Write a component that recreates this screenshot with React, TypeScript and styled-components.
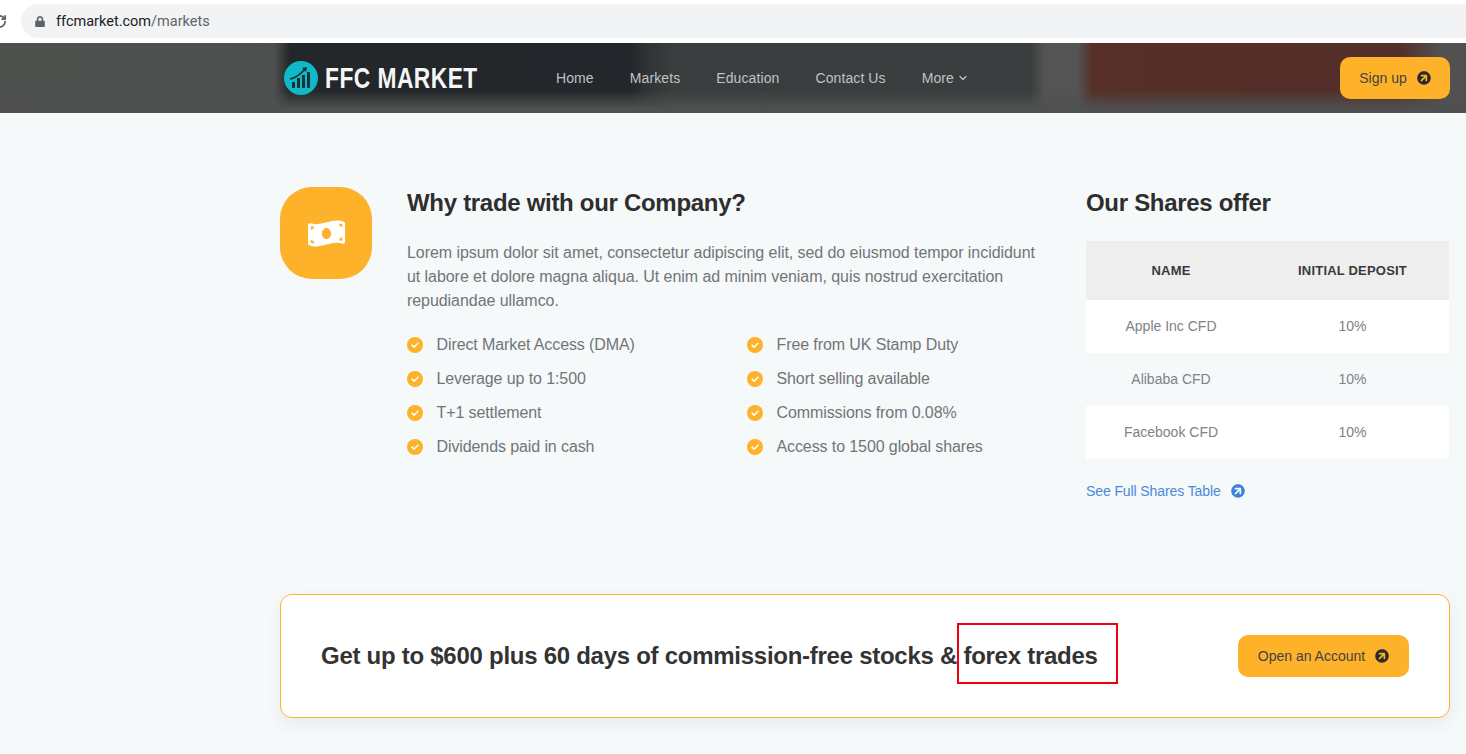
import * as React from "react";
import styled, { createGlobalStyle } from "styled-components";
import { FaArrowCircleRight, FaLock, FaMoneyBillWave } from "react-icons/fa";
import { RotateCw, ChevronDown } from "lucide-react";

const GlobalStyle = createGlobalStyle`
  html, body {
    margin: 0;
    padding: 0;
    height: 100%;
    overflow: hidden;
    background: #f5f9fa;
  }
`;

const Page = styled.div`
  font-family: "Liberation Sans", Arial, sans-serif;
  width: 1466px;
  height: 754px;
  color: #2e2e2e;
`;

const BrowserBar = styled.div`
  height: 43px;
  background: #fff;
  display: flex;
  align-items: flex-start;
  box-sizing: border-box;
  padding-top: 4px;
`;

const ReloadIcon = styled(RotateCw)`
  width: 15px;
  height: 15px;
  margin: 10px 14px 0 -8px;
  color: #5f6368;
  flex: none;
`;

const UrlPill = styled.div`
  flex: 1;
  height: 34px;
  background: #f1f3f4;
  border-radius: 17px 0 0 17px;
  display: flex;
  align-items: center;
  padding-left: 14px;
  gap: 11px;
  font-family: Roboto, sans-serif;
  font-size: 14.5px;
  color: #202124;
  svg {
    color: #5f6368;
    width: 10px;
    height: 11px;
  }
  span {
    color: #5f6368;
  }
`;

const Header = styled.header`
  height: 70px;
  box-sizing: border-box;
  padding: 0 16px 0 284px;
  display: flex;
  align-items: center;
  background:
    linear-gradient(180deg, rgba(79, 80, 80, 0) 0, rgba(79, 80, 80, 0) 68%, #4f5050 94%),
    linear-gradient(
      90deg,
      #4f514f 0,
      #4e504f 274px,
      #24272a 290px,
      #23262a 630px,
      #2f3233 645px,
      #3a3d3e 670px,
      #3a3d3e 1030px,
      #535453 1045px,
      #535453 1078px,
      #552f28 1092px,
      #532f29 1400px,
      #525150 1440px
    );
`;

const Brand = styled.div`
  display: flex;
  align-items: center;
  gap: 7px;
  width: 272px;
  flex: none;
  color: #f6f6f6;
`;

// the wordmark is a condensed face that isn't installed, so squeeze the bold one
const BrandName = styled.span`
  font-weight: 700;
  font-size: 30px;
  letter-spacing: 0.6px;
  white-space: nowrap;
  transform: scaleX(0.76);
  transform-origin: left center;
`;

const Nav = styled.nav`
  display: flex;
  align-items: center;
  gap: 36px;
  flex: 1;
`;

const NavLink = styled.a`
  font-size: 14px;
  letter-spacing: 0.1px;
  color: #bfc2c6;
  display: flex;
  align-items: center;
  gap: 3px;
`;

const PrimaryButton = styled.a<{ $w: number }>`
  width: ${(p) => p.$w}px;
  height: 42px;
  background: #fdb22a;
  border-radius: 10px;
  display: flex;
  align-items: center;
  justify-content: center;
  gap: 10px;
  font-size: 14px;
  color: #444;
  flex: none;
`;

const ArrowIcon = styled(FaArrowCircleRight)<{ $color?: string }>`
  width: 14px;
  height: 14px;
  transform: rotate(-45deg);
  color: ${(p) => p.$color || "#2b2b2b"};
  flex: none;
`;

const Main = styled.main`
  padding: 74px 16px 0 280px;
`;

const Features = styled.section`
  display: grid;
  grid-template-columns: 92px 644px 363px;
  column-gap: 35px;
  justify-content: start;
`;

const IconTile = styled.div`
  width: 92px;
  height: 92px;
  border-radius: 32px;
  background: #fdb22a;
  display: flex;
  align-items: center;
  justify-content: center;
  color: #fff;
  svg {
    width: 37px;
    height: 37px;
  }
`;

const Heading = styled.h2`
  margin: 0;
  font-size: 24px;
  line-height: 32px;
  font-weight: 700;
  letter-spacing: -0.3px;
  color: #2e2e2e;
`;

const Lead = styled.p`
  margin: 22px 0 0;
  font-size: 16px;
  line-height: 24px;
  letter-spacing: -0.06px;
  color: #737478;
`;

const CheckList = styled.ul`
  list-style: none;
  margin: 15px 0 0 -0.5px;
  padding: 0;
  display: grid;
  grid-template-columns: 340px 1fr;
  grid-auto-rows: 34px;
`;

const CheckItem = styled.li`
  display: flex;
  align-items: center;
  gap: 14px;
  font-size: 16px;
  letter-spacing: -0.1px;
  color: #737478;
`;

const Check = () => (
  <svg width="16" height="16" viewBox="0 0 16 16" style={{ flex: "none" }}>
    <circle cx="8" cy="8" r="8" fill="#fdb22a" />
    <path d="M5 8.2l2.1 2L11 6.2" fill="none" stroke="#fff" strokeWidth="1.6" strokeLinecap="round" strokeLinejoin="round" />
  </svg>
);

const SharesTable = styled.div`
  margin-top: 22px;
  display: grid;
  grid-template-columns: 170px 193px;
`;

const HeadCell = styled.div`
  height: 59px;
  background: #eeeeee;
  display: flex;
  align-items: center;
  justify-content: center;
  font-size: 13px;
  letter-spacing: 0.2px;
  font-weight: 700;
  color: #3a3a3a;
`;

const BodyCell = styled.div<{ $stripe: boolean }>`
  height: 53px;
  box-sizing: border-box;
  padding-bottom: 1px;
  background: ${(p) => (p.$stripe ? "#fff" : "transparent")};
  display: flex;
  align-items: center;
  justify-content: center;
  font-size: 14px;
  color: #808285;
`;

const SeeAll = styled.a`
  margin-top: 24px;
  display: flex;
  align-items: center;
  gap: 10px;
  font-size: 14px;
  letter-spacing: -0.1px;
  color: #4a88da;
`;

const Cta = styled.section`
  margin-top: 95px;
  box-sizing: border-box;
  height: 124px;
  width: 1170px;
  background: #fff;
  border: 1px solid #fdb22a;
  border-radius: 12px;
  box-shadow: 0 6px 16px rgba(40, 60, 80, 0.07);
  display: flex;
  align-items: center;
  justify-content: space-between;
  padding: 0 40px;
`;

const CtaText = styled.h3`
  margin: 0;
  font-size: 24px;
  font-weight: 700;
  letter-spacing: -0.27px;
  color: #333;
`;

// red annotation box that was drawn over the screenshot
const Highlight = styled.span`
  position: relative;
  &::after {
    content: "";
    position: absolute;
    left: -6px;
    top: -19px;
    width: 161px;
    height: 61px;
    box-sizing: border-box;
    border: 2px solid #f0000f;
  }
`;

const shares = ["Apple Inc CFD", "Alibaba CFD", "Facebook CFD"];
const left = ["Direct Market Access (DMA)", "Leverage up to 1:500", "T+1 settlement", "Dividends paid in cash"];
const right = ["Free from UK Stamp Duty", "Short selling available", "Commissions from 0.08%", "Access to 1500 global shares"];

export default function App() {
  return (
    <Page>
      <GlobalStyle />
      <BrowserBar>
        <ReloadIcon strokeWidth={2.8} />
        <UrlPill>
          <FaLock />
          <div>
            ffcmarket.com<span>/markets</span>
          </div>
        </UrlPill>
      </BrowserBar>
      <Header>
        <Brand>
          <svg width="34" height="34" viewBox="0 0 34 34" style={{ flex: "none" }}>
            <circle cx="17" cy="17" r="17" fill="#0fb9c8" />
            <path d="M8 27v-6h3v6zM13 27v-10h3v10zM18 27V14h3v13zM23 27V11h3v16z" fill="#123338" />
            <path d="M6 18c5-1 10-4 15-10" fill="none" stroke="#123338" strokeWidth="1.6" />
            <path d="M18 7l5-1-1 5z" fill="#123338" />
          </svg>
          <BrandName>FFC MARKET</BrandName>
        </Brand>
        <Nav>
          <NavLink>Home</NavLink>
          <NavLink>Markets</NavLink>
          <NavLink>Education</NavLink>
          <NavLink>Contact Us</NavLink>
          <NavLink>
            More <ChevronDown size={12} strokeWidth={2.4} />
          </NavLink>
        </Nav>
        <PrimaryButton $w={110}>
          Sign up <ArrowIcon />
        </PrimaryButton>
      </Header>
      <Main>
        <Features>
          <IconTile>
            <FaMoneyBillWave />
          </IconTile>
          <div>
            <Heading>Why trade with our Company?</Heading>
            <Lead>
              Lorem ipsum dolor sit amet, consectetur adipiscing elit, sed do eiusmod tempor incididunt
              <br />
              ut labore et dolore magna aliqua. Ut enim ad minim veniam, quis nostrud exercitation
              <br />
              repudiandae ullamco.
            </Lead>
            <CheckList>
              {left.map((item, i) => (
                <React.Fragment key={item}>
                  <CheckItem>
                    <Check />
                    {item}
                  </CheckItem>
                  <CheckItem>
                    <Check />
                    {right[i]}
                  </CheckItem>
                </React.Fragment>
              ))}
            </CheckList>
          </div>
          <div>
            <Heading>Our Shares offer</Heading>
            <SharesTable>
              <HeadCell>NAME</HeadCell>
              <HeadCell>INITIAL DEPOSIT</HeadCell>
              {shares.map((name, i) => (
                <React.Fragment key={name}>
                  <BodyCell $stripe={i !== 1}>{name}</BodyCell>
                  <BodyCell $stripe={i !== 1}>10%</BodyCell>
                </React.Fragment>
              ))}
            </SharesTable>
            <SeeAll>
              See Full Shares Table <ArrowIcon $color="#3f83d8" />
            </SeeAll>
          </div>
        </Features>
        <Cta>
          <CtaText>
            Get up to $600 plus 60 days of commission-free stocks &amp; <Highlight>forex trades</Highlight>
          </CtaText>
          <PrimaryButton $w={171}>
            Open an Account <ArrowIcon />
          </PrimaryButton>
        </Cta>
      </Main>
    </Page>
  );
}
